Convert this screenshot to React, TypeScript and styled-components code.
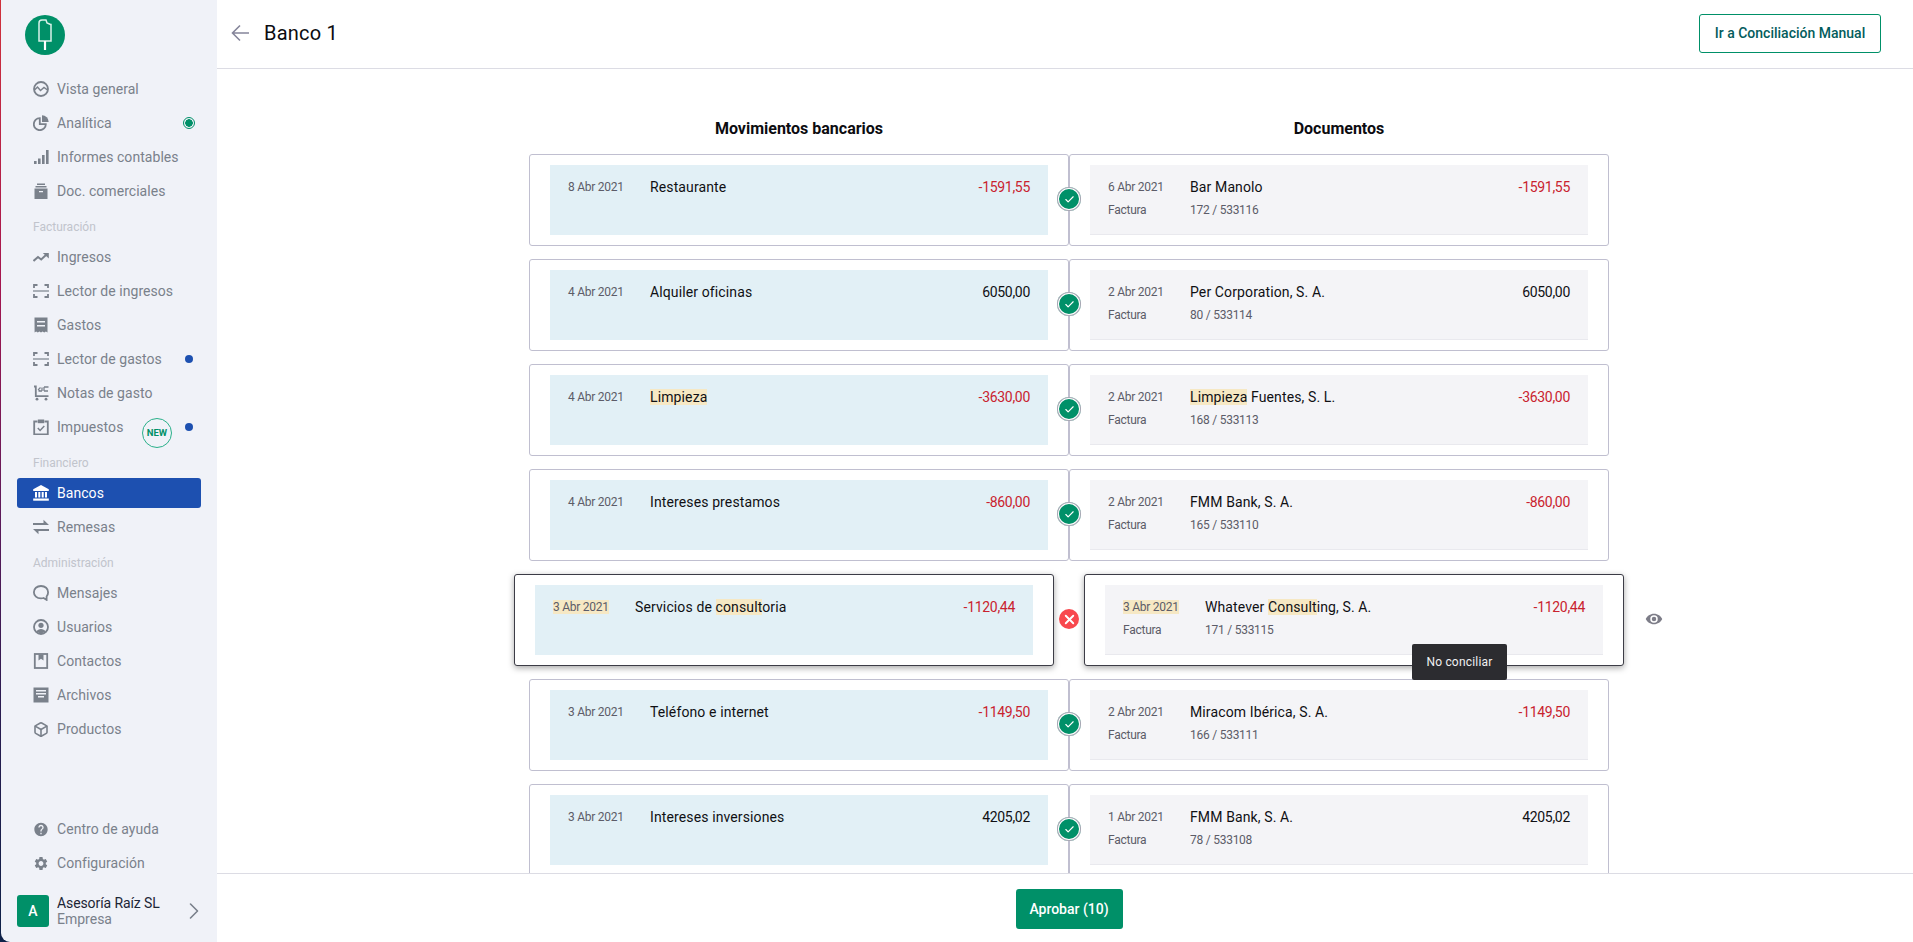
import { ReactNode } from 'react';
import styled, { createGlobalStyle } from 'styled-components';
import { MdHelp, MdSettings } from 'react-icons/md';
import { LuBox, LuCheck, LuChevronRight, LuX } from 'react-icons/lu';

const FONT = `'Roboto', 'Noto Sans', sans-serif`;

const GlobalStyle = createGlobalStyle`
  html, body { margin: 0; height: 100%; background: #fff; }
  body { font-family: ${FONT}; overflow: hidden; }
  * { box-sizing: border-box; }
`;

const Page = styled.div`
  display: grid;
  grid-template-columns: 217px 1fr;
  height: 942px;
  width: 1913px;
`;

const SideEdge = styled.div`
  padding-left: 1px;
  background: linear-gradient(180deg, #d0323c 0%, #a5164f 30%, #5c1a5a 55%, #2a1c50 75%, #0e2148 100%);
`;

const Sidebar = styled.aside`
  display: flex;
  flex-direction: column;
  height: 100%;
  padding: 15px 16px 15px 16px;
  background: #f0f2f8;
  border-bottom-left-radius: 9px;
`;

const LogoWrap = styled.div`
  height: 57px;
  padding-left: 8px;
`;

const NavItem = styled.a<{ $active?: boolean }>`
  display: flex;
  align-items: center;
  height: 30px;
  margin: 2px 0;
  padding: 0 4px 0 16px;
  gap: 8px;
  border-radius: 3px;
  font-size: 14px;
  letter-spacing: 0.05px;
  color: ${(p) => (p.$active ? '#ffffff' : '#7a818b')};
  background: ${(p) => (p.$active ? '#1d50b0' : 'transparent')};
`;

const IconBox = styled.span`
  display: flex;
  align-items: center;
  justify-content: center;
  width: 16px;
  height: 16px;
  flex: none;
`;

const NavLabel = styled.span`
  flex: 1;
  white-space: nowrap;
`;

const SectionLabel = styled.div`
  height: 32px;
  padding: 12px 0 0 16px;
  font-size: 12px;
  line-height: 14px;
  color: #c1c4cc;
`;

const Spacer = styled.div`
  flex: 1;
`;

const LiveDot = styled.span`
  width: 12px;
  height: 12px;
  margin-right: 2px;
  border-radius: 50%;
  border: 1px solid #009068;
  background: radial-gradient(circle, #009068 0 3.5px, transparent 4px);
`;

const BlueDot = styled.span`
  width: 8px;
  height: 8px;
  margin-right: 4px;
  border-radius: 50%;
  background: #1d50b0;
`;

const NewBadge = styled.span`
  display: flex;
  align-items: center;
  justify-content: center;
  width: 30px;
  height: 30px;
  margin: 11px 5px 0 0;
  border-radius: 50%;
  border: 1px solid #2ab08a;
  font-size: 9.5px;
  font-weight: 700;
  letter-spacing: 0;
  color: #009068;
`;

const Company = styled.div`
  display: flex;
  align-items: center;
  gap: 8px;
  height: 32px;
  margin-top: 15px;
`;

const Avatar = styled.div`
  display: flex;
  align-items: center;
  justify-content: center;
  width: 32px;
  height: 32px;
  border-radius: 3px;
  background: #009068;
  color: #fff;
  font-size: 14px;
  font-weight: 500;
`;

const CompanyText = styled.div`
  flex: 1;
  font-size: 14px;
  line-height: 16px;
  color: #7a818b;
`;

const CompanyName = styled.div`
  letter-spacing: -0.1px;
  color: #1c2536;
`;

const Chevron = styled.span`
  display: flex;
  margin-right: -7px;
  color: #7a818b;
`;

const Main = styled.main`
  display: flex;
  flex-direction: column;
  min-width: 0;
  height: 942px;
`;

const Header = styled.header`
  display: flex;
  align-items: center;
  height: 69px;
  flex: none;
  padding: 0 32px 2px 14px;
  border-bottom: 1px solid #dcdce4;
`;

const BackButton = styled.span`
  display: flex;
  width: 33px;
  color: #85859a;
`;

const Title = styled.h1`
  flex: 1;
  margin: 0;
  font-size: 20px;
  font-weight: 400;
  letter-spacing: 0.2px;
  color: #0c0c10;
`;

const OutlineButton = styled.button`
  height: 39px;
  width: 182px;
  padding: 0;
  border: 1px solid #009068;
  border-radius: 3px;
  background: #fff;
  font-family: ${FONT};
  font-size: 14px;
  font-weight: 500;
  color: #035c5c;
`;

const Scroll = styled.div`
  flex: 1;
  min-height: 0;
  overflow: hidden;
  padding: 51px 0 0 8px;
`;

const Columns = styled.div`
  display: grid;
  grid-template-columns: 540px 540px;
  justify-content: center;
  margin-bottom: 17px;
`;

const ColumnTitle = styled.h2`
  margin: 0;
  height: 17px;
  font-size: 16px;
  line-height: 17px;
  font-weight: 700;
  text-align: center;
  color: #0c0c10;
`;

const Row = styled.div<{ $selected?: boolean }>`
  position: relative;
  display: flex;
  justify-content: center;
  gap: ${(p) => (p.$selected ? '30px' : '0')};
  margin-bottom: 13px;
`;

const Card = styled.div<{ $selected?: boolean }>`
  width: 540px;
  height: 92px;
  padding: 10px 20px;
  background: #fff;
  border: 1px solid ${(p) => (p.$selected ? '#3c3c46' : '#c0bfd0')};
  border-radius: 3px;
  box-shadow: ${(p) => (p.$selected ? '0 2px 6px rgba(0, 0, 0, 0.35)' : 'none')};
`;

const Inner = styled.div<{ $bank?: boolean }>`
  display: grid;
  grid-template-columns: 82px 1fr auto;
  grid-auto-rows: 16px;
  row-gap: 7px;
  align-items: center;
  height: 70px;
  padding: 14px 18px 0;
  background: ${(p) => (p.$bank ? '#e2f0f6' : '#f4f4f7')};
  border-bottom: 1px solid ${(p) => (p.$bank ? '#e2f0f6' : '#e9e9ee')};
`;

const DateText = styled.span`
  justify-self: start;
  font-size: 12px;
  letter-spacing: -0.25px;
  color: #5c5c68;
`;

const Name = styled.span`
  font-size: 14px;
  letter-spacing: 0.12px;
  color: #101014;
`;

const Amount = styled.span<{ $negative: boolean }>`
  font-size: 14px;
  letter-spacing: -0.3px;
  color: ${(p) => (p.$negative ? '#c9222e' : '#101014')};
`;

const Mark = styled.mark`
  background: #f6e8c4;
  color: inherit;
`;

const Connector = styled.span`
  position: absolute;
  left: 50%;
  top: 33px;
  display: flex;
  align-items: center;
  justify-content: center;
  width: 24px;
  height: 24px;
  margin-left: -12px;
  border-radius: 50%;
  background: #009068;
  box-shadow: inset 0 0 0 1px #a5a5b2, inset 0 0 0 2px #fff;
  color: #fff;
`;

const Reject = styled.span`
  position: absolute;
  left: 50%;
  top: 35px;
  display: flex;
  align-items: center;
  justify-content: center;
  width: 20px;
  height: 20px;
  margin-left: -10px;
  border-radius: 50%;
  background: #f8484e;
  color: #fff;
`;

const EyeButton = styled.span`
  position: absolute;
  left: calc(50% + 576px);
  top: 36px;
  display: flex;
  color: #7d7d88;
`;

const Tooltip = styled.div`
  position: absolute;
  left: calc(50% + 343px);
  top: 70px;
  z-index: 2;
  display: flex;
  align-items: center;
  justify-content: center;
  width: 95px;
  height: 36px;
  border-radius: 2px;
  background: #2c2c30;
  color: #f0f0f2;
  font-size: 12px;
  letter-spacing: 0.2px;
`;

const Footer = styled.footer`
  display: flex;
  align-items: center;
  justify-content: center;
  height: 69px;
  flex: none;
  padding: 1px 0 0 8px;
  border-top: 1px solid #dcdce4;
  background: #fff;
`;

const PrimaryButton = styled.button`
  width: 107px;
  height: 40px;
  border: 0;
  border-radius: 3px;
  background: #009068;
  font-family: ${FONT};
  font-size: 14px;
  font-weight: 500;
  color: #fff;
`;

function Svg({ children }: { children: ReactNode }) {
  return (
    <svg width="16" height="16" viewBox="0 0 16 16" fill="none" stroke="currentColor" strokeWidth="1.8">
      {children}
    </svg>
  );
}

const ScanIcon = (
  <Svg>
    <path d="M1 5V2h3.500M11.500 2H15v3M1 11v3h3.500M11.500 14H15v-3" />
    <path d="M0 8h16" strokeWidth="1.200" />
  </Svg>
);

const icons: Record<string, ReactNode> = {
  overview: (
    <Svg>
      <circle cx="8" cy="8" r="7" />
      <path d="M1.500 9 4.500 6 7.500 9.500 11 6.500 14.500 9" strokeWidth="1.500" />
    </Svg>
  ),
  analytics: (
    <Svg>
      <path d="M6.800 3.200a6 6 0 1 0 6 6h-6z" />
      <path d="M9 .3a6.700 6.700 0 0 1 6.700 6.700H9z" fill="currentColor" stroke="none" />
    </Svg>
  ),
  reports: (
    <svg width="16" height="16" viewBox="0 0 16 16" fill="currentColor">
      <rect x="1" y="12" width="2.600" height="3" />
      <rect x="5" y="9.500" width="2.600" height="5.500" />
      <rect x="9" y="6" width="2.600" height="9" />
      <rect x="13" y="1" width="2.600" height="14" />
    </svg>
  ),
  docs: (
    <svg width="16" height="16" viewBox="0 0 16 16" fill="currentColor">
      <rect x="4" y="0.500" width="8" height="1.500" />
      <rect x="2.500" y="3" width="11" height="1.500" />
      <path d="M1.500 5.500h13V16h-13zM6 8v1.200h4V8z" fillRule="evenodd" />
    </svg>
  ),
  income: (
    <Svg>
      <path d="M.5 12 5 8l3.200 2.500L13.500 5.500" strokeWidth="2" />
      <path d="M9.800 4h6v5.500z" fill="currentColor" stroke="none" />
    </Svg>
  ),
  scan: ScanIcon,
  expense: (
    <svg width="16" height="16" viewBox="0 0 16 16" fill="currentColor">
      <path d="M1.500.5h13v15l-1.600-1-1.700 1-1.600-1-1.600 1-1.600-1-1.600 1-1.600-1-1.600 1zM4 4v1.500h8V4zM4 8v1.500h8V8z" fillRule="evenodd" />
    </svg>
  ),
  notes: (
    <Svg>
      <path d="M1 1.500h1.800v9.700H15.500" />
      <path d="M9 6H5.500M7.500 2.500 5.500 4.500l2 2M9 2.500V6" strokeWidth="1.300" />
      <path d="M11 2h4.500M11 2v4M11 6h4" strokeWidth="1.300" />
      <circle cx="4" cy="14.200" r="1.400" fill="currentColor" stroke="none" />
      <circle cx="13" cy="14.200" r="1.400" fill="currentColor" stroke="none" />
    </Svg>
  ),
  taxes: (
    <Svg>
      <path d="M4.500 2.500H1.200v12.800h13.600V2.500h-3.300" />
      <path d="M4.800.5h6.400v3.700H4.800z" fill="currentColor" stroke="none" />
      <path d="m4.800 9 2.300 2.400 4.200-4.400" strokeWidth="1.500" />
    </Svg>
  ),
  bank: (
    <svg width="16" height="16" viewBox="0 0 16 16" fill="currentColor">
      <path d="M8 0 .2 4.200V6h15.600V4.200z" />
      <rect x="2" y="7" width="2" height="5.500" />
      <rect x="5.300" y="7" width="2" height="5.500" />
      <rect x="8.700" y="7" width="2" height="5.500" />
      <rect x="12" y="7" width="2" height="5.500" />
      <rect x="0.200" y="13.500" width="15.600" height="2.200" />
    </svg>
  ),
  remit: (
    <svg width="16" height="16" viewBox="0 0 16 16" fill="currentColor">
      <path d="M0 4h10.500V.8L16 6H0z" />
      <path d="M16 10v2H5.500v3.200L0 10z" />
    </svg>
  ),
  messages: (
    <Svg>
      <path d="M8 1C3.800 1 .9 3.700.9 7.200s2.900 6.200 7.100 6.200c.9 0 1.800-.1 2.600-.4l3 1.900v-3.400c1-1.100 1.500-2.600 1.500-4.300C15.100 3.700 12.200 1 8 1z" />
    </Svg>
  ),
  users: (
    <Svg>
      <circle cx="8" cy="8" r="7" />
      <circle cx="8" cy="6.300" r="2.600" fill="currentColor" stroke="none" />
      <path d="M3.200 12.600c1.200-1.900 2.900-2.700 4.800-2.700s3.600.8 4.800 2.700L8 14.800z" fill="currentColor" stroke="none" />
    </Svg>
  ),
  contacts: (
    <Svg>
      <rect x="1.800" y="1" width="12.400" height="14" />
      <path d="M5.500 1.500h5v6L8 5.800 5.500 7.500z" fill="currentColor" stroke="none" />
    </Svg>
  ),
  files: (
    <svg width="16" height="16" viewBox="0 0 16 16" fill="currentColor">
      <path d="M.5.5h15v15H.5zM3 3v1.500h10V3zM3 6v1.500h10V6zM5 9v1.500h6V9z" fillRule="evenodd" />
    </svg>
  ),
};

type Nav = { label: string; icon: ReactNode; active?: boolean; extra?: ReactNode };

const mainNav: Nav[] = [
  { label: 'Vista general', icon: icons.overview },
  { label: 'Analítica', icon: icons.analytics, extra: <LiveDot /> },
  { label: 'Informes contables', icon: icons.reports },
  { label: 'Doc. comerciales', icon: icons.docs },
];

const billingNav: Nav[] = [
  { label: 'Ingresos', icon: icons.income },
  { label: 'Lector de ingresos', icon: icons.scan },
  { label: 'Gastos', icon: icons.expense },
  { label: 'Lector de gastos', icon: icons.scan, extra: <BlueDot /> },
  { label: 'Notas de gasto', icon: icons.notes },
  {
    label: 'Impuestos',
    icon: icons.taxes,
    extra: (
      <>
        <NewBadge>NEW</NewBadge>
        <BlueDot />
      </>
    ),
  },
];

const financeNav: Nav[] = [
  { label: 'Bancos', icon: icons.bank, active: true },
  { label: 'Remesas', icon: icons.remit },
];

const adminNav: Nav[] = [
  { label: 'Mensajes', icon: icons.messages },
  { label: 'Usuarios', icon: icons.users },
  { label: 'Contactos', icon: icons.contacts },
  { label: 'Archivos', icon: icons.files },
  { label: 'Productos', icon: <LuBox size={17} strokeWidth={2.4} /> },
];

const helpNav: Nav[] = [
  { label: 'Centro de ayuda', icon: <MdHelp size={19} /> },
  { label: 'Configuración', icon: <MdSettings size={19} /> },
];

function NavList({ items }: { items: Nav[] }) {
  return (
    <>
      {items.map((item) => (
        <NavItem key={item.label} $active={item.active}>
          <IconBox>{item.icon}</IconBox>
          <NavLabel>{item.label}</NavLabel>
          {item.extra}
        </NavItem>
      ))}
    </>
  );
}

type Match = {
  bankDate: ReactNode;
  bankName: ReactNode;
  amount: string;
  docDate: ReactNode;
  docName: ReactNode;
  docRef: string;
  selected?: boolean;
};

const matches: Match[] = [
  { bankDate: '8 Abr 2021', bankName: 'Restaurante', amount: '-1591,55', docDate: '6 Abr 2021', docName: 'Bar Manolo', docRef: '172 / 533116' },
  { bankDate: '4 Abr 2021', bankName: 'Alquiler oficinas', amount: '6050,00', docDate: '2 Abr 2021', docName: 'Per Corporation, S. A.', docRef: '80 / 533114' },
  {
    bankDate: '4 Abr 2021',
    bankName: <Mark>Limpieza</Mark>,
    amount: '-3630,00',
    docDate: '2 Abr 2021',
    docName: (
      <>
        <Mark>Limpieza</Mark> Fuentes, S. L.
      </>
    ),
    docRef: '168 / 533113',
  },
  { bankDate: '4 Abr 2021', bankName: 'Intereses prestamos', amount: '-860,00', docDate: '2 Abr 2021', docName: 'FMM Bank, S. A.', docRef: '165 / 533110' },
  {
    bankDate: <Mark>3 Abr 2021</Mark>,
    bankName: (
      <>
        Servicios de <Mark>consult</Mark>oria
      </>
    ),
    amount: '-1120,44',
    docDate: <Mark>3 Abr 2021</Mark>,
    docName: (
      <>
        Whatever <Mark>Consult</Mark>ing, S. A.
      </>
    ),
    docRef: '171 / 533115',
    selected: true,
  },
  { bankDate: '3 Abr 2021', bankName: 'Teléfono e internet', amount: '-1149,50', docDate: '2 Abr 2021', docName: 'Miracom Ibérica, S. A.', docRef: '166 / 533111' },
  { bankDate: '3 Abr 2021', bankName: 'Intereses inversiones', amount: '4205,02', docDate: '1 Abr 2021', docName: 'FMM Bank, S. A.', docRef: '78 / 533108' },
];

function MatchRow({ match }: { match: Match }) {
  const negative = match.amount.startsWith('-');
  return (
    <Row $selected={match.selected}>
      <Card $selected={match.selected}>
        <Inner $bank>
          <DateText>{match.bankDate}</DateText>
          <Name>{match.bankName}</Name>
          <Amount $negative={negative}>{match.amount}</Amount>
        </Inner>
      </Card>
      <Card $selected={match.selected}>
        <Inner>
          <DateText>{match.docDate}</DateText>
          <Name>{match.docName}</Name>
          <Amount $negative={negative}>{match.amount}</Amount>
          <DateText>Factura</DateText>
          <DateText>{match.docRef}</DateText>
        </Inner>
      </Card>
      {match.selected ? (
        <>
          <Reject>
            <LuX size={15} strokeWidth={3} />
          </Reject>
          <EyeButton>
            <svg width="18" height="18" viewBox="0 0 24 24" fill="currentColor">
              <path
                d="M12 5C7 5 2.700 8.100 1 12c1.700 3.900 6 7 11 7s9.300-3.100 11-7c-1.700-3.900-6-7-11-7zm0 12a5 5 0 1 1 0-10 5 5 0 0 1 0 10zm0-8a3 3 0 1 0 0 6 3 3 0 0 0 0-6z"
                fillRule="evenodd"
              />
            </svg>
          </EyeButton>
          <Tooltip>No conciliar</Tooltip>
        </>
      ) : (
        <Connector>
          <LuCheck size={11} strokeWidth={2.5} />
        </Connector>
      )}
    </Row>
  );
}

export default function App() {
  return (
    <Page>
      <GlobalStyle />
      <SideEdge>
        <Sidebar>
          <LogoWrap>
            <svg width="40" height="40" viewBox="0 0 40 40">
              <circle cx="20" cy="20" r="20" fill="#009068" />
              <path d="M14 8a3 3 0 0 1 3-3h4l1 3 3.500 1.500h.5V26H14z" fill="none" stroke="#d9f1e9" strokeWidth="1.500" />
              <path d="M20 26v9" stroke="#ffffff" strokeWidth="2.200" />
            </svg>
          </LogoWrap>
          <NavList items={mainNav} />
          <SectionLabel>Facturación</SectionLabel>
          <NavList items={billingNav} />
          <SectionLabel>Financiero</SectionLabel>
          <NavList items={financeNav} />
          <SectionLabel>Administración</SectionLabel>
          <NavList items={adminNav} />
          <Spacer />
          <NavList items={helpNav} />
          <Company>
            <Avatar>A</Avatar>
            <CompanyText>
              <CompanyName>Asesoría Raíz SL</CompanyName>
              Empresa
            </CompanyText>
            <Chevron>
              <LuChevronRight size={28} strokeWidth={1.4} />
            </Chevron>
          </Company>
        </Sidebar>
      </SideEdge>
      <Main>
        <Header>
          <BackButton>
            <svg width="18" height="18" viewBox="0 0 18 18" fill="none" stroke="currentColor" strokeWidth="1.600">
              <path d="M18 9H1.500M9 1.500 1.500 9 9 16.500" />
            </svg>
          </BackButton>
          <Title>Banco 1</Title>
          <OutlineButton>Ir a Conciliación Manual</OutlineButton>
        </Header>
        <Scroll>
          <Columns>
            <ColumnTitle>Movimientos bancarios</ColumnTitle>
            <ColumnTitle>Documentos</ColumnTitle>
          </Columns>
          {matches.map((match, i) => (
            <MatchRow key={i} match={match} />
          ))}
        </Scroll>
        <Footer>
          <PrimaryButton>Aprobar (10)</PrimaryButton>
        </Footer>
      </Main>
    </Page>
  );
}
